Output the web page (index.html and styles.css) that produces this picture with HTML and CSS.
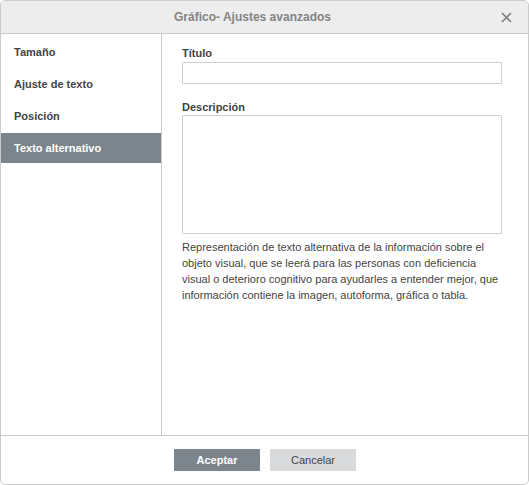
FILE: index.html
```html
<!DOCTYPE html>
<html lang="es">
<head>
<meta charset="utf-8">
<title>Gráfico- Ajustes avanzados</title>
<link rel="stylesheet" href="styles.css">
</head>
<body>
<div class="dialog">
  <div class="header">
    <span class="spacer"></span>
    <span class="title">Gráfico- Ajustes avanzados</span>
    <span class="close-wrap">
      <svg class="close" width="11" height="11" viewBox="0 0 11 11"><path d="M1 1 L10 10 M10 1 L1 10" stroke="#808080" stroke-width="1.6" fill="none"/></svg>
    </span>
  </div>
  <div class="body">
    <ul class="sidebar">
      <li class="item">Tamaño</li>
      <li class="item">Ajuste de texto</li>
      <li class="item">Posición</li>
      <li class="item active">Texto alternativo</li>
    </ul>
    <div class="content">
      <label class="label">Título</label>
      <div class="input"></div>
      <label class="label label-second">Descripción</label>
      <div class="textarea"></div>
      <p class="note">Representación de texto alternativa de la información sobre el objeto visual, que se leerá para las personas con deficiencia visual o deterioro cognitivo para ayudarles a entender mejor, que información contiene la imagen, autoforma, gráfica o tabla.</p>
    </div>
  </div>
  <div class="footer">
    <button class="btn btn-primary">Aceptar</button>
    <button class="btn btn-secondary">Cancelar</button>
  </div>
</div>
</body>
</html>
```

FILE: styles.css
```css
html, body {
  margin: 0;
  padding: 0;
  background: #ffffff;
}

body {
  font-family: "Liberation Sans", Arial, sans-serif;
  font-size: 11px;
  color: #444444;
}

.dialog {
  width: 529px;
  height: 485px;
  box-sizing: border-box;
  border: 1px solid #cbcbcb;
  border-radius: 5px;
  display: flex;
  flex-direction: column;
  overflow: hidden;
  background: #ffffff;
}

.header {
  height: 32px;
  flex: 0 0 auto;
  background: #ededed;
  border-bottom: 1px solid #cbcbcb;
  display: grid;
  grid-template-columns: 1fr auto 1fr;
  align-items: center;
}

.title {
  font-size: 12px;
  font-weight: bold;
  color: #848484;
  line-height: 32px;
  padding-right: 24px;
}

.close-wrap {
  display: flex;
  justify-content: flex-end;
  padding-right: 16px;
  padding-top: 1px;
}

.body {
  flex: 1 1 auto;
  display: flex;
  min-height: 0;
}

.sidebar {
  list-style: none;
  margin: 0;
  padding: 3px 0 0 0;
  width: 160px;
  border-right: 1px solid #cbcbcb;
  display: flex;
  flex-direction: column;
  gap: 2px;
}

.item {
  height: 30px;
  line-height: 30px;
  padding-left: 13px;
  font-weight: bold;
  color: #444444;
}

.item.active {
  background: #7d858c;
  color: #ffffff;
}

.content {
  flex: 1 1 auto;
  padding: 12px 0 0 20px;
  display: flex;
  flex-direction: column;
  align-items: flex-start;
}

.label {
  display: block;
  line-height: 14px;
  font-weight: bold;
  color: #444444;
  margin-bottom: 2px;
}

.label-second {
  margin-top: 16px;
  margin-bottom: 1px;
}

.input {
  width: 320px;
  height: 22px;
  box-sizing: border-box;
  border: 1px solid #cfcfcf;
  border-radius: 1px;
}

.textarea {
  width: 320px;
  height: 119px;
  box-sizing: border-box;
  border: 1px solid #cfcfcf;
  border-radius: 1px;
}

.note {
  margin: 5px 0 0 0;
  width: 322px;
  line-height: 16px;
  color: #444444;
}

.footer {
  flex: 0 0 auto;
  height: 48px;
  border-top: 1px solid #cbcbcb;
  display: flex;
  justify-content: center;
  align-items: center;
  gap: 10px;
  padding-left: 1px;
}

.btn {
  width: 86px;
  height: 22px;
  border: none;
  border-radius: 1px;
  font-family: "Liberation Sans", Arial, sans-serif;
  font-size: 11px;
  padding: 0;
  margin: 0;
}

.btn-primary {
  background: #7d858c;
  color: #ffffff;
  font-weight: bold;
}

.btn-secondary {
  background: #d8dadc;
  color: #444444;
}
```
